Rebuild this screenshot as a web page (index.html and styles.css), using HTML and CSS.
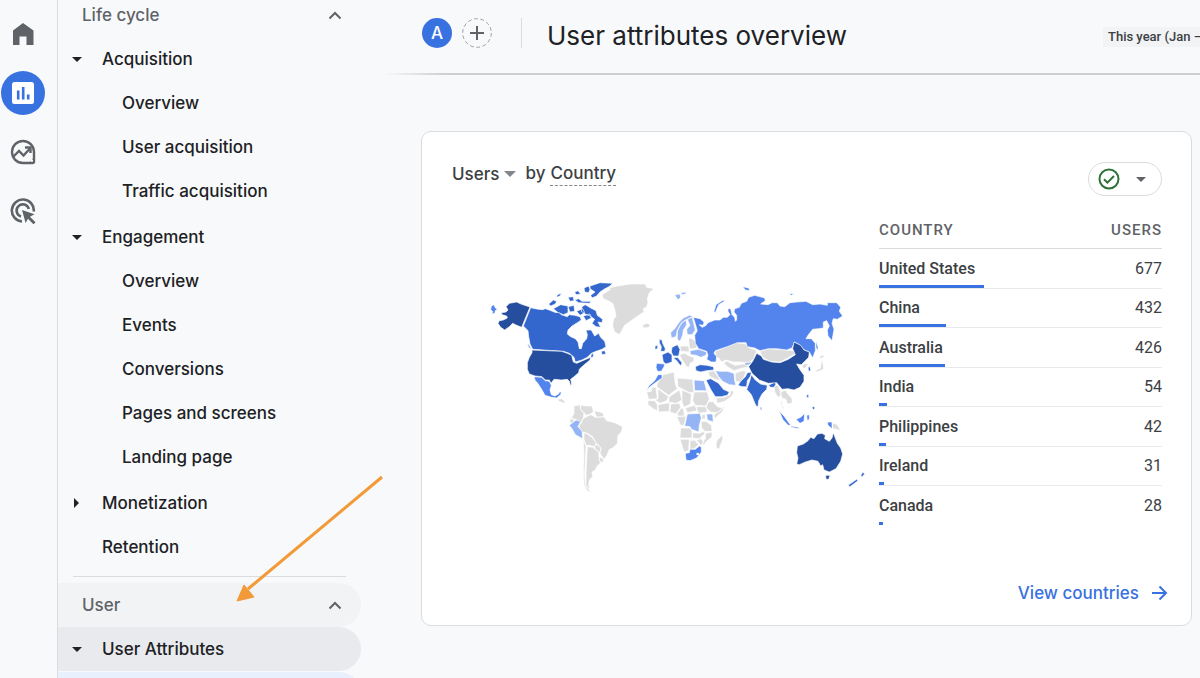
FILE: index.html
```html
<!DOCTYPE html>
<html lang="en">
<head>
    <meta charset="UTF-8">
    <meta name="viewport" content="width=device-width, initial-scale=1.0">
    <title>User attributes overview</title>
    <link rel="stylesheet" href="styles.css">
</head>
<body>
    <nav class="rail" aria-label="Main">
        <a href="#" class="rail-item" aria-label="Home">
            <svg width="26" height="26" viewBox="0 0 26 26"><path fill="#5f6368" d="M3 9.500 13 2l10.500 7.500V24H16.500v-8.500h-7V24H3z"/></svg>
        </a>
        <a href="#" class="rail-item active" aria-label="Reports">
            <svg width="24" height="24" viewBox="0 0 24 24"><rect x="1" y="1" width="22" height="22" rx="2.500" fill="#fff"/><path stroke="#3871e0" stroke-width="2.600" d="M7.200 9.500v9M12.200 6v12.500M17.200 13.500v5"/></svg>
        </a>
        <a href="#" class="rail-item" aria-label="Explore">
            <svg width="26" height="26" viewBox="0 0 26 26" fill="none" stroke="#5f6368" stroke-width="2.400"><path d="M24 13v9.500a1.500 1.500 0 0 1-1.500 1.500H13A11 11 0 1 1 24 13z"/><path d="M3 18l6-6 4.500 4.500 6.500-7"/><path d="M15 8.500h5.500V14"/><path d="M24 16v8h-8c4 0 8-4 8-8z" fill="#5f6368" stroke="none"/><circle cx="21.800" cy="21.800" r="1.300" fill="#f8f9fb" stroke="none"/></svg>
        </a>
        <a href="#" class="rail-item" aria-label="Advertising">
            <svg width="26" height="26" viewBox="0 0 26 26" fill="none" stroke="#5f6368" stroke-width="2.600"><path d="M12 23.500A11 11 0 1 1 23.800 13.500"/><path d="M11 18.500A6.200 6.200 0 1 1 18.800 11"/><path fill="#5f6368" stroke="none" d="M12 12l12.500 4.200-4.600 2.500 5.600 5.600-2 2-5.600-5.600-2.300 4.400z"/></svg>
        </a>
    </nav>

    <nav class="sidebar" aria-label="Reports">
        <button class="section" type="button">Life cycle
            <svg width="14" height="9" viewBox="0 0 14 9"><path d="M1.500 7.500 7 2l5.500 5.500" fill="none" stroke="#5f6368" stroke-width="2"/></svg>
        </button>
        <a href="#" class="group"><span class="caret down"></span>Acquisition</a>
        <ul>
            <li><a href="#">Overview</a></li>
            <li><a href="#">User acquisition</a></li>
            <li><a href="#">Traffic acquisition</a></li>
        </ul>
        <a href="#" class="group"><span class="caret down"></span>Engagement</a>
        <ul>
            <li><a href="#">Overview</a></li>
            <li><a href="#">Events</a></li>
            <li><a href="#">Conversions</a></li>
            <li><a href="#">Pages and screens</a></li>
            <li><a href="#">Landing page</a></li>
        </ul>
        <a href="#" class="group"><span class="caret right"></span>Monetization</a>
        <a href="#" class="group"><span class="caret"></span>Retention</a>
        <hr>
        <button class="section hovered" type="button">User
            <svg width="14" height="9" viewBox="0 0 14 9"><path d="M1.500 7.500 7 2l5.500 5.500" fill="none" stroke="#5f6368" stroke-width="2"/></svg>
        </button>
        <a href="#" class="group current"><span class="caret down"></span>User Attributes</a>
        <div class="selected"></div>
    </nav>

    <main>
        <header>
            <button class="avatar" type="button">A</button>
            <button class="add" type="button" aria-label="Add comparison">
                <svg width="30" height="30" viewBox="0 0 30 30" fill="none"><circle cx="15" cy="15" r="14.300" stroke="#9aa0a6" stroke-dasharray="3.800 2.600"/><path d="M15 8v14M8 15h14" stroke="#5f6368" stroke-width="2"/></svg>
            </button>
            <div class="separator"></div>
            <h1>User attributes overview</h1>
            <button class="date" type="button">This year (Jan –</button>
        </header>

        <section class="card">
            <div class="card-head">
                <h2>
                    <button class="metric" type="button">Users<span class="caret down"></span></button>
                    by <span class="dimension">Country</span>
                </h2>
                <button class="status" type="button" aria-label="Data quality">
                    <svg width="22" height="22" viewBox="0 0 22 22" fill="none" stroke="#2e7237" stroke-width="2"><circle cx="11" cy="11" r="9.500"/><path d="M6 11.300l3.400 3.400L16 8"/></svg>
                    <span class="caret down"></span>
                </button>
            </div>

            <div class="card-body">
                <div class="map">
                    <svg viewBox="0 0 1170 720" role="img" aria-label="Users by country">
                        <!-- Americas -->
                        <g>
                            <path class="none" d="M366 74 392 58 386 54 412 48 450 42 495 42 500 52 522 56 508 68 502 86 504 98 500 110 490 116 492 126 470 140 448 156 434 166 424 184 418 194 404 186 398 168 400 150 408 138 404 118 398 100 384 92 370 86zM486 166l14-6 12 4-6 8-14 2zM282 408l18-4 2 14 10 10-2 16-6 16-18-12-12-4 8-14zM302 406l18 2 16 0 4 16-8 8-14 4-6-8-10-8zM342 422l26 6 4 12-22 2zM270 446l12 2-2 10-10 2zM300 462l12-18 20-10 14 8 26-2 8 12 24 6 24 12-4 16-10 10-2 24-14 14-10 4-8 20-8 10-12-18 2-15-14-15-10-20-16-10-16-4-10-14zM312 488l10 4 16 12 12 16-8 10-12-4-12 0-6-16zM344 528l10-6 10 14-4 12-14-10zM322 530l16 2 18 14 2 24 6 6-14 14-4 10-10 6 2 14-10 10-2 16 4 10-12-6 0-40 2-40zM358 560l14 8-4 10-10-4zM310 506l8 24-2 40-2 40 2 35 18 23-12-6-10-17-2-45 2-40zM232 388l14-2 10 10-4 4-14-6z"/>
                            <path class="lvl1" d="M268 466l20-16 14 4-8 16 12 14 2 22-22-12-10-18z"/>
                            <path class="lvl2" d="M162 320l23 2 11 10 12 2 6 12-4 14 4 14 10 4 12-6 2-6 6 0-2 8-12 10-15-2-20-6-10-18-13-20-6-6zM34 108l8-4 4 10 6 4-6 4-2 8-8 2 2-8-6-4z"/>
                            <path class="lvl3" d="M152 113 170 117 188 119 196 116 210 121 228 128 236 126 244 134 262 140 268 134 284 136 300 140 304 150 292 158 276 168 264 180 262 192 272 200 286 206 294 216 298 236 304 236 308 220 320 206 322 194 318 180 334 180 344 198 356 190 362 202 374 214 378 230 366 238 348 244 334 250 322 262 306 270 286 276 282 262 268 250 250 244 158 238 150 222 146 200 144 182 130 168z"/>
                            <path class="lvl3" d="M330 48l30-10 38 2-8 8-18 10-12 8-10 12-14 6-4-8 13-10-15-10zM312 54l14-6 4 10-4 10-12-2zM306 110l10-6 16 10 16 8 4 14 16 12-2 10-12-2 8 16-14-2-12-10 8-12-14-10-14-6-12-8zM220 116l22-12 22 4 0 20-14 6-18-8zM206 102l14-12 10 4-4 8-14 6zM264 110l18-4 2 18-14 2zM284 90l12-4 10 8 28 0-6 6-32-2zM264 82l16-2 2 12-12 2zM232 74l12-4-4 8-10 4zM284 66l10-4 8 10-14 2zM310 138l20-6 4 12-16 8zM364 244l10-2 4 10-12 2zM334 252l6-2 0 10-8 4zM290 124l18-8 6 12-14 8zM142 220l8 10 4 8-8-6z"/>
                            <path class="lvl4" d="M78 110l10-10 22-4 15 7 25 8-25 61-17-7-10-5-10 10-14 10-12-8-8-12 4-8 12-2 12-6-2-6-14-4-2-6 14-2 6-6zM156 240l89 4 17 6 13 6 5 20 10 4 18-8 14-6 10-4-2 8-12 10-10 8-10 10-2 10-14 12-10 8 3 14-3 6-4-14-6-6-17 2-23-2-9 12-5-10-12 0-10-10-21-2-17-6-6-14 0-20 6-16 8-14z"/>
                        </g>
                        <!-- Europe, Africa, Asia and Oceania -->
                        <g transform="translate(480 0)">
                            <path class="none" d="M120 228l26 0 2 18-26-2zM146 204l10 2 14 10 2 16-10 4-14 0zM118 254l16-4 14 8 14 4 0 12-12 6-2 12-8-2-12-18zM226 244l36-14 28-12 28 4 6 10 26 10-4 10-6 16-14 10-26-2-20 0-22-6-14 6-6-10-12-8zM250 278l12-4 22 12 16-2 20-4 6 10-26 6-18 6-20-12zM360 244l26-8 24 2 30 2 18 2 8 8-22 14-24 12-30-2-22-12zM204 306l18-4 12 18 8 12-16-4-18-10zM286 310l20-8 12 2-6 18-12 14-14-2zM228 384l24-2 18-8 2-14 10 6-8 14-20 14-22 6z"/>
                            <path class="none" d="M112 324l46 4 4 40-14 0-34-18zM70 314l32-8 4 38 6 12-26 20-36-26 2-10zM20 366l14-2 2-12 12 0 4 34-26 2zM54 356l32 24-6 12-20 8-14-10 8-4zM88 380l30-20 8 30-18 10-22-4zM126 360l28 12-2 30-20 10-6-16zM162 366h40l6 22-10 20-32-2-8-14zM204 396l14-2 14 16 16 4-14 14-22-2-14-12zM222 434l20-14 12-16-6 20-24 22zM92 402l26-2 4 12-14 20-18-6zM24 392l20 0 8 12 0 18-12-6-16-12zM54 404l34-6 0 26-32 2zM112 430l12-16 6 2 4 22-20 0zM136 414l28-8 8 16-30 6zM168 410l30 0 4 16-26 4zM110 440l28-2-6 28-10 0zM186 434h10v12l-10 2zM184 454l14 0 16 12 2 18-22 0-10-12zM122 474l28 0 6 10 0 20-36 0zM158 488l20 2 14-6 2 8-16 14-20-2zM196 490l20-4 0 14-18 16-8 12-2-10 8-12zM120 508l28 0-2 34-14 4zM150 512l14-2 12 14-14 12-12 2zM170 510l14-4 8 12-10 8zM232 510l16-16 0 14-10 28-8 0-2-14z"/>
                            <path class="none" d="M402 350l10-6 8 16 4 16-10 6-10-16zM420 368l16-8 8 12 12 14 0 14-14 2-4-14-12-4zM424 388l4 20 6 12-8-8-4-16zM578 458l14 6 10 18-12-4-12-2zM538 260l12-6 2 6-10 6zM544 268l6 18 0 12-20 8-4-4 16-8zM486 288l10-8 8 2-6 10-6 4z"/>
                            <path class="lvl1" d="M92 188l12-12 14-20 12-12 18-8 12 2-8 6-16 6-14 14-10 16-4 20-14 4zM124 158l14-8 2 14-10 16-2 16-8 18-8-6 0-24zM142 148l14-8 4 16 6 24-10 14-14 0-2-16 10-12zM104 74l16-2 2 10-8 8zM122 68l16-2 0 6-12 2zM150 242l26-4 24 8-2 10-16 6-14-6-16-2zM226 302l14 2 22 0 20 6 2 22 4 14-20-2-20-10-12-14zM162 330l30 2 8 30-36 0zM142 432l38-2 4 14-6 22-2 20-22-8-4-8-16-2zM200 432l18 0 2 24-18-6zM314 278l22-2-8 8-12 2z"/>
                            <path class="lvl2" d="M160 142 180 146 192 156 190 166 178 164 186 172 196 168 204 158 224 150 240 150 250 142 262 142 270 134 264 124 264 116 272 116 276 134 284 142 286 154 290 150 290 136 282 126 284 116 298 112 304 100 320 94 326 82 344 76 374 84 376 92 362 102 384 104 396 98 412 98 420 108 434 110 450 98 470 96 498 94 518 104 540 102 562 106 562 98 590 98 602 112 598 124 608 138 592 148 580 146 576 160 582 178 576 212 564 198 562 180 568 168 560 152 550 156 550 174 536 176 518 178 504 196 498 206 514 206 526 220 526 242 518 264 508 246 492 240 480 226 464 216 456 234 440 240 410 236 386 236 360 242 344 234 322 230 318 218 292 218 262 230 226 242 222 250 230 260 228 276 214 276 200 268 204 256 200 244 176 236 166 220 164 196 172 182z"/>
                            <path class="lvl2" d="M222 124l6-20 22-14 3 4-17 10-6 14-4 10zM308 50l18 4 4 8-14-2zM446 70l16 2-8 4zM50 280l24 2-2 8-8 14-12 0-4-12zM44 332l10-18 12 0 0 10-20 14-18 14-8 12 6-16zM136 550l12-2 2-10 16 0 12-10 6 4 0 14-14 18-20 8-12-2zM418 424l14 14 20 28-8 0-16-18zM452 468l24 4 0 4-22-4zM468 448l14-6 12-12-2 24-12 6zM562 456l14 0 0 20-12-10zM500 436l8-2 0 14-6 4zM528 212l6 20 0 10-6-10z"/>
                            <circle class="hole" cx="173" cy="552" r="4"/>
                            <path class="lvl3" d="M58 208l8 2 2 10 8 16-2 8-12 0 2-14-6-12zM45 228l8-2 0 10-8 2zM66 254l18-8 12 8 0 22-18 6-8-6zM96 232l16-8 8 14-4 20-16 0-6-12zM100 264l12-2 14 16-4 10-12-16zM166 290l14-6 20 2 20 4 2 10-22 2-18 4-14-4zM294 346l8-12 14-14 6-12 12-2-2 12-10 14-2 18-14 0zM334 314l12 16 16 12 20 4-2 12-14 14-10 20-2 18-6-2-14-34-14-16 6-16 4-12zM386 346l18-10 4 6-6 10-10 0zM198 330l14-4 24 14 14 18 18 8-6 10-18 4-18 0-14-22zM504 292l6-2 2 12-6 2zM500 374l6 0 0 10-6-2zM516 410l8 0 0 8-6 0zM360 412l4 0 2 8-4 0zM668 606l6 6-8 8-4-2zM624 646l26-18 4 4-24 18z"/>
                            <path class="lvl4" d="M326 290l12-16 12-24 14 8 6 10 25 8 25 2 25-10 21-14-8-18 4-20 20 10 10 14 16 6-2 16-10 10-12 12-14-2 8 14 14 20 0 18-12 18-18 8-18-4-18 2-16-20-25 2-27-10-22-20zM472 528l18-6 14-10 8-10 10 4 10-14 14-2 10 6-2 10 14 8 8-10 4-16 6 16 6 16 10 14 6 18-6 22-14 22-20 10-16-6-4-16-6 4-8-14-18-4-20 6-18 8-8-2 4-18-4-16zM557 616h13l-4 12-8 0z"/>
                        </g>
                    </svg>
                </div>

                <table>
                    <thead>
                        <tr><th>COUNTRY</th><th>USERS</th></tr>
                    </thead>
                    <tbody>
                        <tr><td>United States<div class="bar" style="width: 105px"></div></td><td>677</td></tr>
                        <tr><td>China<div class="bar" style="width: 67px"></div></td><td>432</td></tr>
                        <tr><td>Australia<div class="bar" style="width: 66px"></div></td><td>426</td></tr>
                        <tr><td>India<div class="bar" style="width: 8px"></div></td><td>54</td></tr>
                        <tr><td>Philippines<div class="bar" style="width: 7px"></div></td><td>42</td></tr>
                        <tr><td>Ireland<div class="bar" style="width: 5px"></div></td><td>31</td></tr>
                        <tr><td>Canada<div class="bar" style="width: 4px"></div></td><td>28</td></tr>
                    </tbody>
                </table>
            </div>

            <a href="#" class="more">View countries
                <svg width="16" height="16" viewBox="0 0 16 16"><path d="M0 8h14M7.500 1.500 14 8l-6.500 6.500" fill="none" stroke="#3871e0" stroke-width="2"/></svg>
            </a>
        </section>
    </main>

    <svg class="pointer" width="150" height="130" viewBox="0 0 150 130"><path d="M148 2 14 114" stroke="#f29a38" stroke-width="3"/><path d="M3 126 10 110 20 122z" fill="#f29a38" stroke="#f29a38"/></svg>
</body>
</html>
```

FILE: styles.css
```css
* {
    box-sizing: border-box;
}
body {
    margin: 0;
    min-height: 100vh;
    display: flex;
    overflow: hidden;
    background-color: #f8f9fb;
    color: #202124;
    font-family: Inter, "Open Sans", sans-serif;
    font-size: 17px;
}
a {
    color: inherit;
    text-decoration: none;
}
button {
    margin: 0;
    padding: 0;
    border: none;
    background: none;
    color: inherit;
    font: inherit;
    cursor: pointer;
}
.caret {
    width: 10px;
}
.caret.down {
    border: 5px solid transparent;
    border-top-color: currentColor;
    border-bottom: none;
}
.caret.right {
    width: 5px;
    margin: 0 3px 0 2px;
    border: 5px solid transparent;
    border-left-color: currentColor;
    border-right: none;
}

/* icon rail */
.rail {
    flex: none;
    width: 58px;
    padding: 12px 10px 0 1px;
    border-right: 1px solid #dadce0;
    display: flex;
    flex-direction: column;
    gap: 15px;
}
.rail-item {
    width: 44px;
    height: 44px;
    display: flex;
    align-items: center;
    justify-content: center;
    border-radius: 22px;
}
.rail-item.active {
    background-color: #3871e0;
}

/* report navigation */
.sidebar {
    flex: none;
    width: 303px;
    height: 100vh;
    margin-right: 24px;
    overflow: hidden;
    font-weight: 500;
}
.section {
    width: 100%;
    height: 44px;
    padding: 0 19px 0 24px;
    display: flex;
    align-items: center;
    justify-content: space-between;
    border-radius: 0 22px 22px 0;
    color: #5f6368;
}
.section:first-child {
    margin-top: -7px;
}
.section.hovered {
    background-color: #f1f3f4;
}
.group {
    height: 44px;
    padding-left: 14px;
    display: flex;
    align-items: center;
    border-radius: 0 22px 22px 0;
}
.group .caret {
    margin-right: 20px;
}
.group .caret.right {
    margin-right: 23px;
}
.group.current {
    background-color: #e8eaed;
}
.sidebar ul {
    list-style: none;
    margin: 0;
    padding: 0 0 2px;
}
.sidebar li a {
    display: block;
    padding-left: 64px;
    line-height: 44px;
}
.sidebar hr {
    margin: 7px 15px 6px;
    border: none;
    border-top: 1px solid #dadce0;
}
.selected {
    height: 44px;
    margin-top: 1px;
    border-radius: 0 22px 22px 0;
    background-color: #e8f0fe;
}

/* content */
main {
    flex: 1;
    min-width: 0;
}
header {
    height: 75px;
    padding: 0 0 7px 37px;
    display: flex;
    align-items: center;
    border-bottom: 2px solid;
    border-image: linear-gradient(to right, transparent, #cdcfd2 60px) 1;
    overflow: hidden;
    white-space: nowrap;
}
.avatar {
    width: 30px;
    height: 30px;
    border-radius: 50%;
    background-color: #3871e0;
    color: #fff;
    font-weight: 500;
}
.add {
    height: 30px;
    margin-left: 10px;
}
.separator {
    width: 1px;
    height: 30px;
    margin: 0 25px 0 29px;
    background-color: #dadce0;
}
h1 {
    margin: 4px 0 0;
    font-size: 26px;
    font-weight: 400;
}
.date {
    margin: 7px -2px 0 auto;
    padding: 0 0 0 5px;
    line-height: 20px;
    background-color: #f1f3f4;
    color: #3c4043;
    font-family: Roboto, sans-serif;
    font-size: 13px;
    font-weight: 500;
}
.card {
    margin: 56px 8px 0 36px;
    padding: 30px 29px 20px 30px;
    border: 1px solid #dadce0;
    border-radius: 10px;
    background-color: #fff;
    color: #3c4043;
}
.card-head {
    display: flex;
    align-items: flex-start;
    justify-content: space-between;
}
h2 {
    margin: 0;
    display: flex;
    gap: 5px;
    line-height: 23px;
    font-size: 17px;
    font-weight: 500;
}
.metric {
    display: flex;
    align-items: center;
    gap: 5px;
    margin-right: 4px;
}
.metric .caret {
    border-width: 6px;
    border-bottom: none;
    width: 12px;
    color: #80868b;
}
.dimension {
    border-bottom: 1px dashed #80868b;
}
.status {
    width: 74px;
    height: 34px;
    padding: 0 15px 0 9px;
    display: flex;
    align-items: center;
    justify-content: space-between;
    border: 1px solid #dadce0;
    border-radius: 17px;
    color: #5f6368;
}
.card-body {
    margin-top: 16px;
    display: flex;
}
.map {
    flex: 1;
    min-width: 0;
    padding: 58px 8px 0 28px;
}
.map svg {
    display: block;
    width: 100%;
    max-width: 390px;
}
.map path {
    stroke: #fff;
    stroke-width: 2;
    stroke-linejoin: round;
}
.none { fill: #dcdcdc; }
.lvl1 { fill: #94b4f5; }
.lvl2 { fill: #5384ed; }
.lvl3 { fill: #3367cd; }
.lvl4 { fill: #254e9f; }
.hole { fill: #fff; }

table {
    flex: none;
    width: 283px;
    border-spacing: 0;
    font-family: Roboto, sans-serif;
    font-size: 16px;
}
th {
    height: 37px;
    padding: 0;
    border-bottom: 1px solid #dadce0;
    color: #5f6368;
    font-size: 15px;
    font-weight: 500;
    letter-spacing: 1px;
    text-align: left;
}
td {
    padding: 4px 0 0;
    border-bottom: 1px solid #e8eaed;
    line-height: 32px;
    font-weight: 500;
    vertical-align: top;
}
tr:nth-child(even) td {
    padding-top: 3px;
}
tr:last-child td {
    border-bottom: none;
}
th:last-child,
td:last-child {
    text-align: right;
}
td:last-child {
    font-weight: 400;
}
.bar {
    height: 3px;
    background-color: #3871e0;
}
.more {
    margin: 56px -6px 0 auto;
    width: fit-content;
    display: flex;
    align-items: center;
    gap: 13px;
    line-height: 24px;
    color: #3871e0;
    font-weight: 500;
}

/* arrow drawn over the navigation */
.pointer {
    position: absolute;
    left: 234px;
    top: 475px;
    pointer-events: none;
}
```
